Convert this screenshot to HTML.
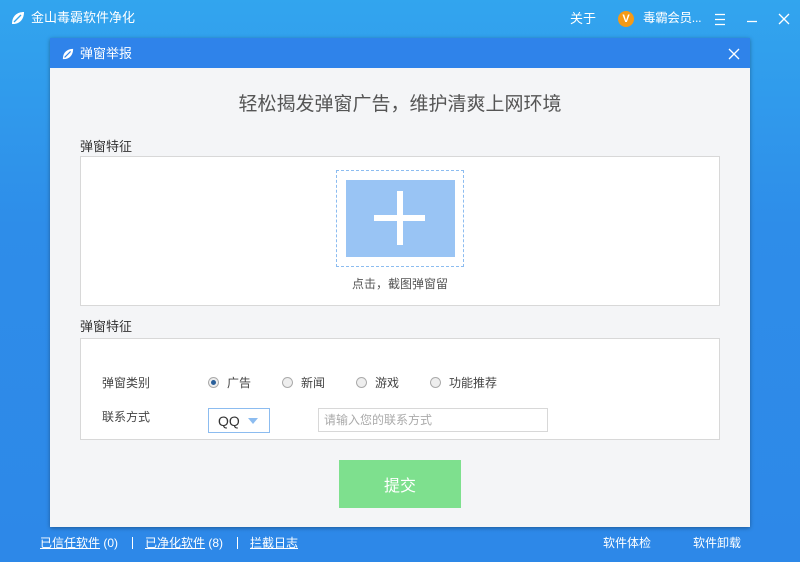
<!DOCTYPE html>
<html><head><meta charset="utf-8"><style>
*{margin:0;padding:0;box-sizing:border-box}
body{width:800px;height:562px;overflow:hidden;font-family:"Liberation Sans","Noto Sans CJK SC",sans-serif;font-size:12px;line-height:1;background:linear-gradient(#32a5ee,#2e8de9 40%,#2d88e8);position:relative;color:#fff}
.a{position:absolute}
.dlg{left:50px;top:38px;width:700px;height:489px;background:#f4f5f7;box-shadow:0 1px 4px rgba(0,0,0,.35)}
.tb{left:0;top:0;width:700px;height:30px;background:#2f83ea}
.lbl{color:#333;font-size:13px}
.box{background:#fff;border:1px solid #d8d8d8}
.radio{display:inline-block;width:11px;height:11px;border-radius:50%;border:1px solid #aaa;background:#eee;vertical-align:-1px;margin-right:8px;position:relative}
.radio.on::after{content:"";position:absolute;left:2px;top:2px;width:5px;height:5px;border-radius:50%;background:#2a5f9a}
.foot{color:#fff;font-size:12px}
u{text-decoration:underline}
</style></head><body>
<svg class="a" style="left:11px;top:11px" width="14" height="14" viewBox="0 0 14 14"><path d="M1 13 C1 5 6 1 13 1 C13 8 9 13 2 13 Z" fill="#fff"/><path d="M3 11 L10 4" stroke="#32a5ee" stroke-width="1.3"/></svg>
<div class="a" style="left:31px;top:11px;font-size:13px">金山毒霸软件净化</div>
<div class="a" style="left:570px;top:12px;font-size:13px">关于</div>
<div class="a" style="left:618px;top:11px;width:16px;height:16px;border-radius:50%;background:#f59a16;font-size:11px;font-weight:bold;text-align:center;line-height:16px">V</div>
<div class="a" style="left:643px;top:12px;font-size:12.5px;letter-spacing:-0.3px">毒霸会员...</div>
<svg class="a" style="left:0;top:0" width="800" height="38">
 <g stroke="#fff" stroke-width="1.3" fill="none">
  <path d="M715 14.5H725M715 19.5H725M715 24.5H725"/>
  <path d="M747 21.5H757"/>
  <path d="M779 14L789 24M789 14L779 24"/>
 </g>
</svg>

<div class="a dlg">
 <div class="a tb">
  <svg class="a" style="left:12px;top:10px" width="12" height="12" viewBox="0 0 14 14"><path d="M1 13 C1 5 6 1 13 1 C13 8 9 13 2 13 Z" fill="#fff"/><path d="M3 11 L10 4" stroke="#2f83ea" stroke-width="1.3"/></svg>
  <div class="a" style="left:30px;top:9px;font-size:13px">弹窗举报</div>
  <svg class="a" style="left:678px;top:10px" width="12" height="12"><path d="M1 1L11 11M11 1L1 11" stroke="#fff" stroke-width="1.3"/></svg>
 </div>
 <div class="a" style="left:0;width:700px;top:57px;text-align:center;color:#555;font-size:19px">轻松揭发弹窗广告，维护清爽上网环境</div>
 <div class="a lbl" style="left:30px;top:102px">弹窗特征</div>
 <div class="a box" style="left:30px;top:118px;width:640px;height:150px">
  <div class="a" style="left:255px;top:13px;width:128px;height:97px;border:1px dashed #8cbcf0"></div>
  <div class="a" style="left:265px;top:23px;width:109px;height:77px;background:#99c4f4"></div>
  <div class="a" style="left:293px;top:58px;width:51px;height:6px;background:#fff"></div>
  <div class="a" style="left:316px;top:34px;width:6px;height:54px;background:#fff"></div>
  <div class="a" style="left:0;width:638px;top:121px;text-align:center;color:#555;font-size:12px">点击，截图弹窗留</div>
 </div>
 <div class="a lbl" style="left:30px;top:282px">弹窗特征</div>
 <div class="a box" style="left:30px;top:300px;width:640px;height:102px">
  <div class="a lbl" style="left:21px;top:38px;font-size:12px;color:#444">弹窗类别</div>
  <div class="a" style="left:127px;top:38px;color:#444"><span class="radio on"></span>广告</div>
  <div class="a" style="left:201px;top:38px;color:#444"><span class="radio"></span>新闻</div>
  <div class="a" style="left:275px;top:38px;color:#444"><span class="radio"></span>游戏</div>
  <div class="a" style="left:349px;top:38px;color:#444"><span class="radio"></span>功能推荐</div>
  <div class="a lbl" style="left:21px;top:72px;font-size:12px;color:#444">联系方式</div>
  <div class="a" style="left:127px;top:69px;width:62px;height:25px;border:1px solid #8cbcf0;background:#fff;color:#333;font-size:14px;padding:5px 0 0 9px">QQ</div>
  <div class="a" style="left:167px;top:79px;width:0;height:0;border-left:5px solid transparent;border-right:5px solid transparent;border-top:6px solid #8cbcf0"></div>
  <div class="a" style="left:237px;top:69px;width:230px;height:24px;border:1px solid #d8d8d8;background:#fff;color:#aaa;padding:5px 0 0 5px">请输入您的联系方式</div>
 </div>
 <div class="a" style="left:289px;top:422px;width:122px;height:48px;background:#7ee08e;text-align:center;line-height:54px;font-size:16px;color:#fff">提交</div>
</div>

<div class="a foot" style="left:40px;top:537px"><u>已信任软件</u> (0)</div>
<div class="a" style="left:132px;top:537px;width:1px;height:12px;background:#fff"></div>
<div class="a foot" style="left:145px;top:537px"><u>已净化软件</u> (8)</div>
<div class="a" style="left:237px;top:537px;width:1px;height:12px;background:#fff"></div>
<div class="a foot" style="left:250px;top:537px"><u>拦截日志</u></div>
<div class="a foot" style="left:603px;top:537px">软件体检</div>
<div class="a foot" style="left:693px;top:537px">软件卸载</div>
</body></html>
